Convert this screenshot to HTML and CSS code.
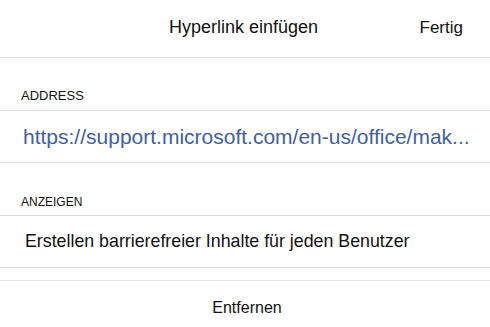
FILE: index.html
```html
<!DOCTYPE html>
<html lang="de">
<head>
<meta charset="utf-8">
<link rel="stylesheet" href="styles.css">
</head>
<body>
<div class="sheet">
  <header class="header">
    <div class="header-side"></div>
    <div class="title">Hyperlink einfügen</div>
    <div class="header-side done">Fertig</div>
  </header>
  <div class="label label-a">ADDRESS</div>
  <div class="row url">https://support.microsoft.com/en-us/office/mak...</div>
  <div class="label label-b">ANZEIGEN</div>
  <div class="row text">Erstellen barrierefreier Inhalte für jeden Benutzer</div>
  <div class="spacer"></div>
  <div class="remove">Entfernen</div>
</div>
</body>
</html>
```
FILE: styles.css
```css
* { box-sizing: border-box; }
html, body { margin: 0; padding: 0; background: #fff; }
body {
  font-family: "Liberation Sans", Arial, sans-serif;
  color: #111;
  width: 490px;
  height: 327px;
  overflow: hidden;
}
.sheet { display: flex; flex-direction: column; }
.header {
  height: 58px;
  border-bottom: 1px solid #dcdcdc;
  display: grid;
  grid-template-columns: 1fr auto 1fr;
  align-items: center;
  padding-bottom: 2px;
}
.title { font-size: 18px; color: #111; padding-right: 3px; }
.done { text-align: right; padding-right: 27px; font-size: 17px; }
.label {
  height: 53px;
  border-bottom: 1px solid #dcdcdc;
  display: flex;
  align-items: flex-end;
  padding-left: 21px;
  color: #111;
}
.label-a { font-size: 13px; padding-bottom: 7px; }
.label-b { font-size: 12px; padding-bottom: 6px; }
.row {
  height: 52px;
  border-bottom: 1px solid #dcdcdc;
  display: flex;
  align-items: center;
  white-space: nowrap;
  overflow: hidden;
}
.url { font-size: 21px; color: #44609a; padding-left: 23px; }
.text { font-size: 17.8px; padding-left: 25px; color: #111; }
.spacer { height: 13px; border-bottom: 1px solid #e4e4e4; }
.remove {
  height: 53px;
  display: flex;
  align-items: center;
  justify-content: center;
  font-size: 16px;
  padding-left: 4px;
  color: #111;
}
```
